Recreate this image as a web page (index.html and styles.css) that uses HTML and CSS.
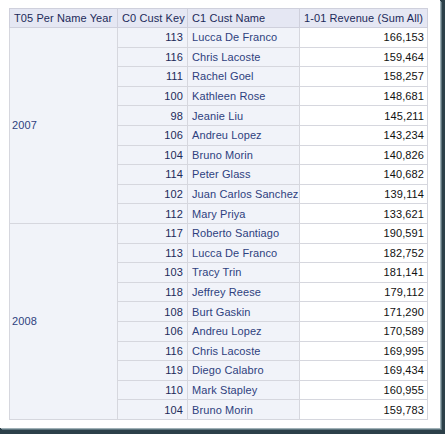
FILE: index.html
```html
<!DOCTYPE html>
<html>
<head>
<meta charset="utf-8">
<link rel="stylesheet" href="styles.css">
</head>
<body>
<div class="frame">
  <table class="pivot">
    <colgroup>
      <col class="c-year"><col class="c-key"><col class="c-name"><col class="c-rev">
    </colgroup>
    <thead>
      <tr><th>T05 Per Name Year</th><th>C0 Cust Key</th><th>C1 Cust Name</th><th>1-01 Revenue (Sum All)</th></tr>
    </thead>
    <tbody>
      <tr><td class="year" rowspan="10">2007</td><td class="key">113</td><td class="name">Lucca De Franco</td><td class="rev">166,153</td></tr>
      <tr><td class="key">116</td><td class="name">Chris Lacoste</td><td class="rev">159,464</td></tr>
      <tr><td class="key">111</td><td class="name">Rachel Goel</td><td class="rev">158,257</td></tr>
      <tr><td class="key">100</td><td class="name">Kathleen Rose</td><td class="rev">148,681</td></tr>
      <tr><td class="key">98</td><td class="name">Jeanie Liu</td><td class="rev">145,211</td></tr>
      <tr><td class="key">106</td><td class="name">Andreu Lopez</td><td class="rev">143,234</td></tr>
      <tr><td class="key">104</td><td class="name">Bruno Morin</td><td class="rev">140,826</td></tr>
      <tr><td class="key">114</td><td class="name">Peter Glass</td><td class="rev">140,682</td></tr>
      <tr><td class="key">102</td><td class="name">Juan Carlos Sanchez</td><td class="rev">139,114</td></tr>
      <tr><td class="key">112</td><td class="name">Mary Priya</td><td class="rev">133,621</td></tr>
      <tr><td class="year" rowspan="10">2008</td><td class="key">117</td><td class="name">Roberto Santiago</td><td class="rev">190,591</td></tr>
      <tr><td class="key">113</td><td class="name">Lucca De Franco</td><td class="rev">182,752</td></tr>
      <tr><td class="key">103</td><td class="name">Tracy Trin</td><td class="rev">181,141</td></tr>
      <tr><td class="key">118</td><td class="name">Jeffrey Reese</td><td class="rev">179,112</td></tr>
      <tr><td class="key">108</td><td class="name">Burt Gaskin</td><td class="rev">171,290</td></tr>
      <tr><td class="key">106</td><td class="name">Andreu Lopez</td><td class="rev">170,589</td></tr>
      <tr><td class="key">116</td><td class="name">Chris Lacoste</td><td class="rev">169,995</td></tr>
      <tr><td class="key">119</td><td class="name">Diego Calabro</td><td class="rev">169,434</td></tr>
      <tr><td class="key">110</td><td class="name">Mark Stapley</td><td class="rev">160,955</td></tr>
      <tr><td class="key">104</td><td class="name">Bruno Morin</td><td class="rev">159,783</td></tr>
    </tbody>
  </table>
</div>
</body>
</html>
```
FILE: styles.css
```css
html, body {
  margin: 0;
  padding: 0;
}
body {
  width: 445px;
  height: 434px;
  overflow: hidden;
  background: #2c4049;
}
.frame {
  width: 440px;
  height: 428px;
  background: #ffffff;
  box-sizing: border-box;
  padding: 8px 0 0 9px;
  box-shadow: 1px 1px 0 #9fb0b6, 2px 2px 0 #5f767f;
}
.pivot {
  border-collapse: collapse;
  table-layout: fixed;
  width: 418px;
  font-family: "Liberation Sans", Arial, sans-serif;
  font-size: 11px;
  letter-spacing: 0.1px;
  border: 1px solid #c9cad8;
}
.c-year { width: 108px; }
.c-key { width: 70px; }
.c-name { width: 112px; }
.c-rev { width: 128px; }
.pivot th {
  height: 18px;
  padding: 0 4px;
  background: #e5e7f3;
  color: #1c2a5a;
  font-weight: normal;
  text-align: left;
  white-space: nowrap;
  border: 1px solid #cfd0dc;
}
.pivot td {
  height: 18.6px;
  padding: 0 4px;
  white-space: nowrap;
  border: 1px solid #d6d7de;
  background: #f1f3f9;
  color: #2e3f7e;
}
.pivot td.year {
  vertical-align: middle;
  padding-left: 2px;
  color: #2e3f7e;
}
.pivot td.key {
  text-align: right;
  color: #1c2a5a;
}
.pivot td.rev {
  text-align: right;
  background: #ffffff;
  color: #111111;
  padding-right: 3px;
}
```
